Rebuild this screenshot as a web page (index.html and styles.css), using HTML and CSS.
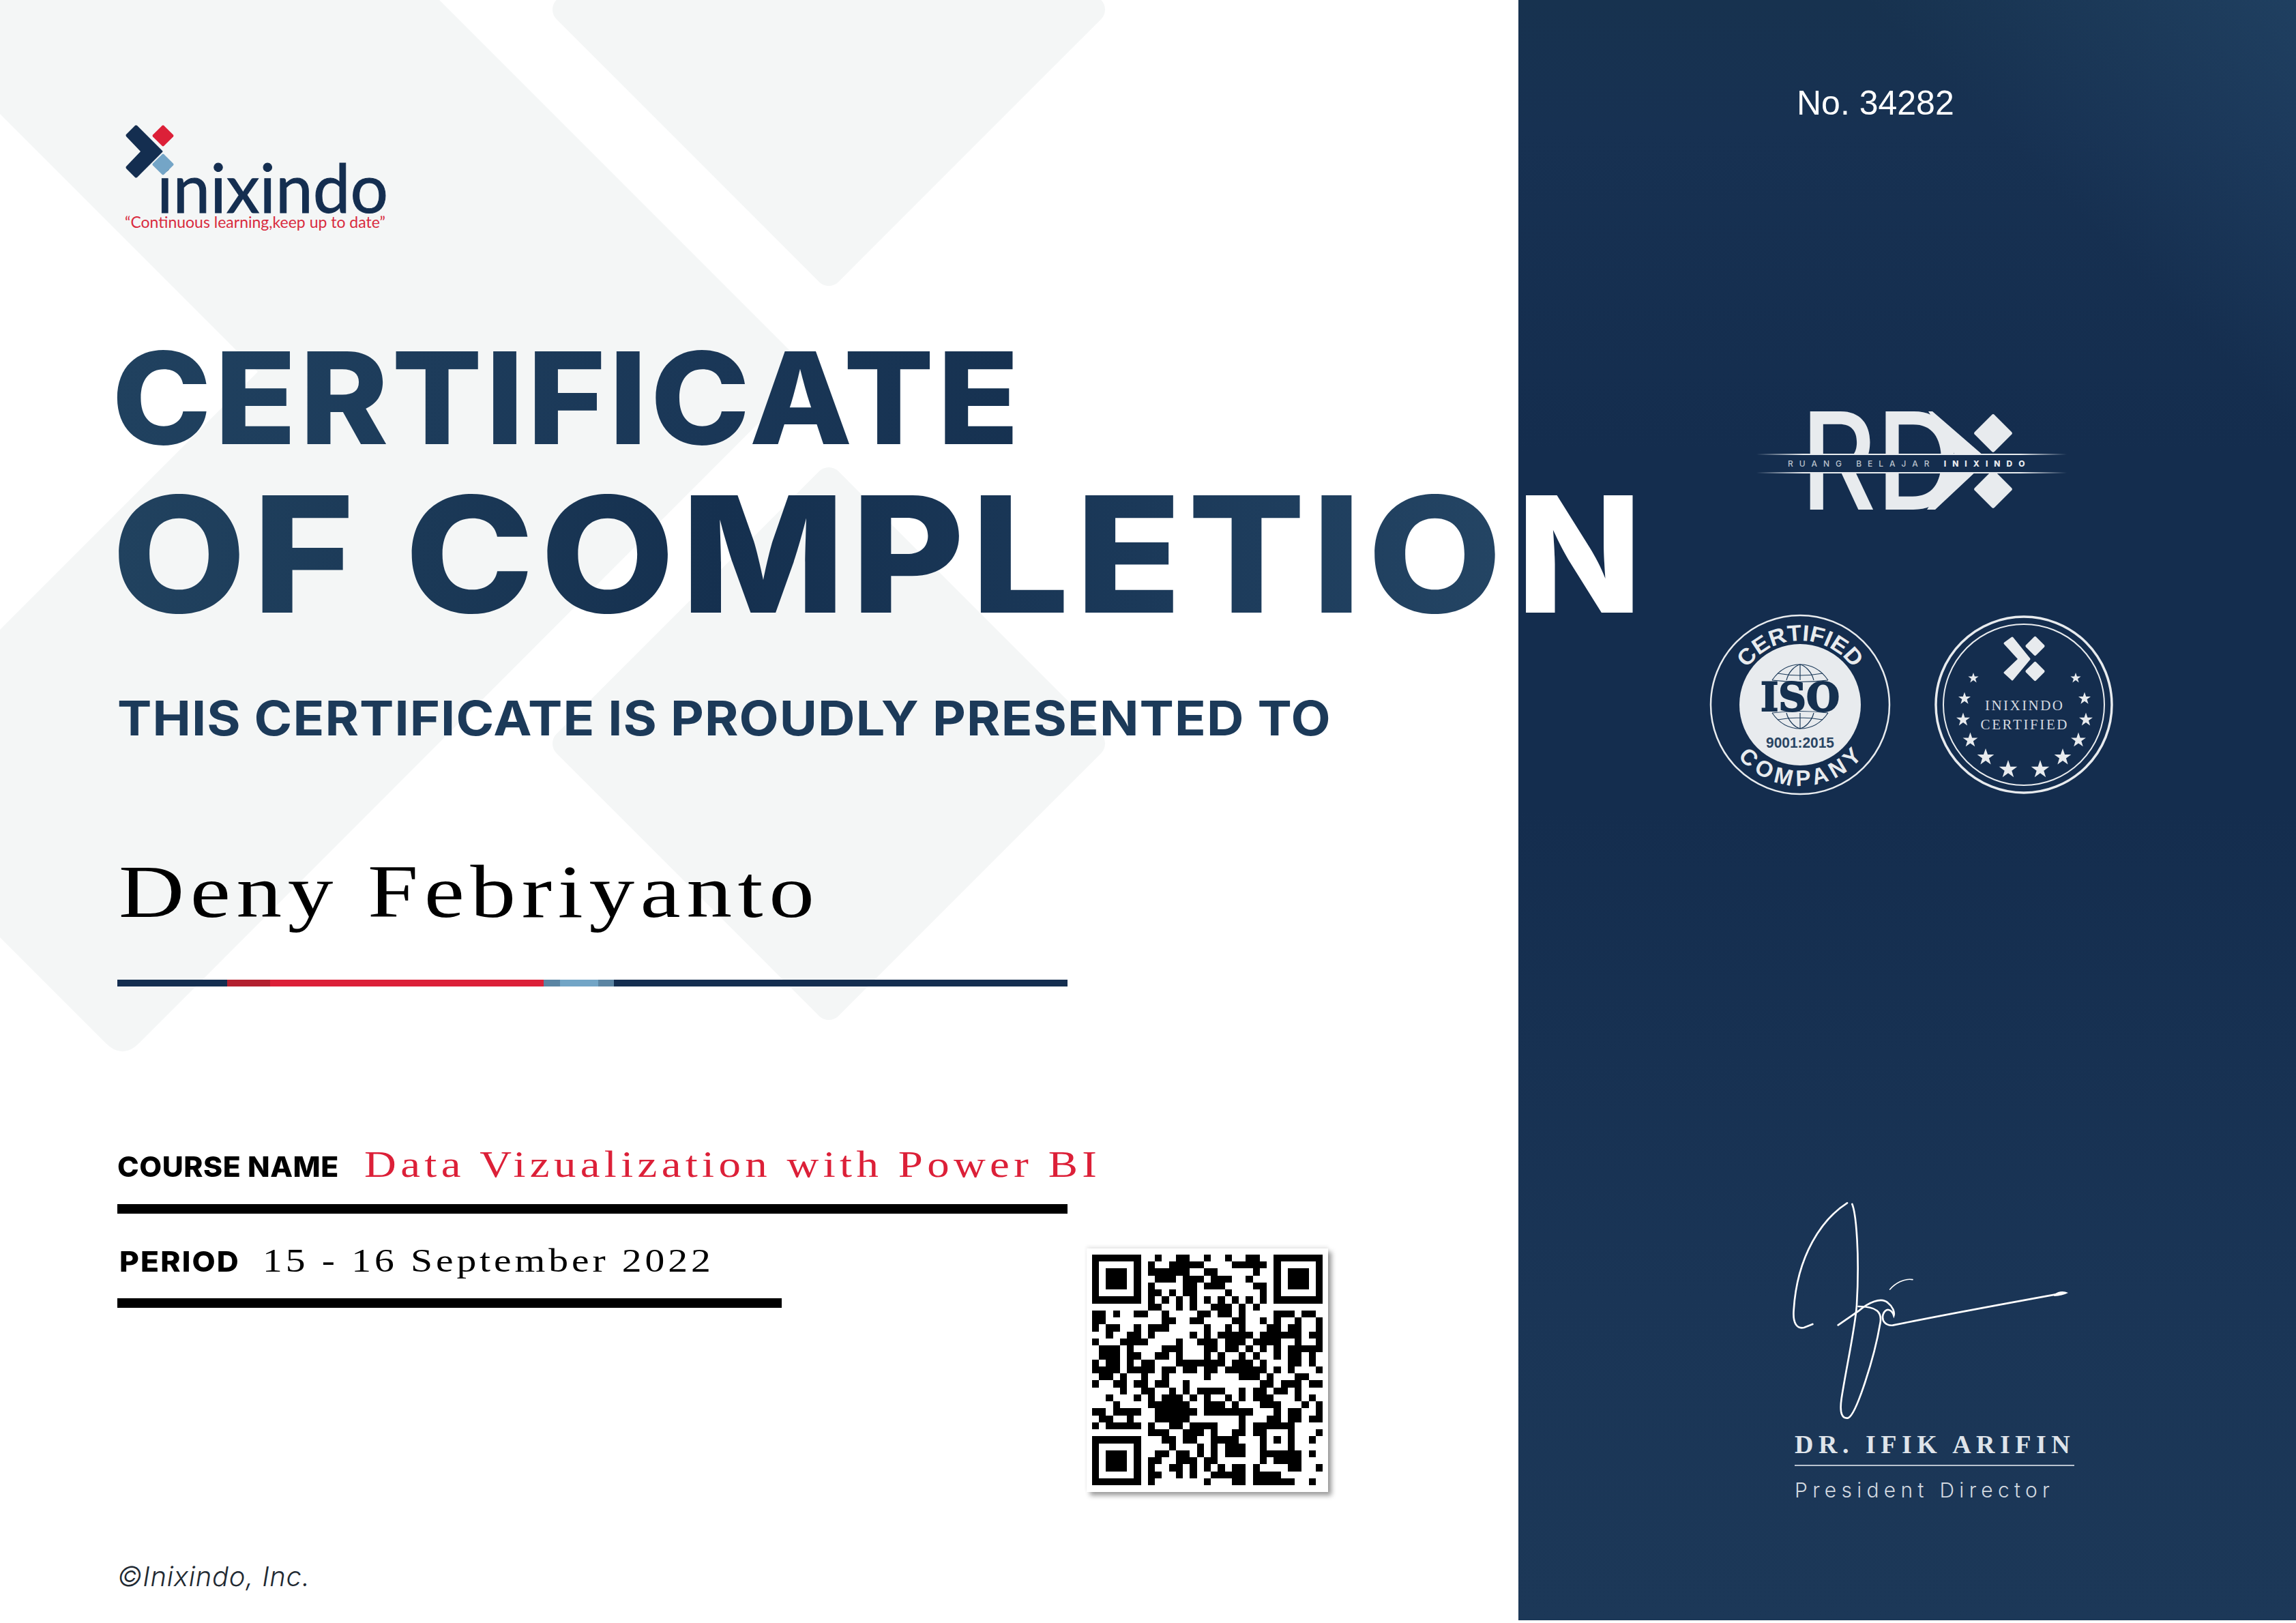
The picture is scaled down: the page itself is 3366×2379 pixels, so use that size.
FILE: index.html
```html
<!DOCTYPE html>
<html lang="en">
<head>
<meta charset="utf-8">
<title>Certificate of Completion</title>
<link rel="stylesheet" href="styles.css">
</head>
<body>
<div class="certificate">
  <svg class="pattern" viewBox="0 0 2226 2379" width="2226" height="2379" aria-hidden="true">
    <path class="pattern-shape" d="M0 0H644L1188 544L205 1528Q180 1554 155 1529L0 1374V923L378 545L0 167Z"/>
    <polygon class="pattern-round" points="1215,-371 1600,14 1215,399 830,14"/>
    <polygon class="pattern-round" points="1215,705 1600,1090 1215,1475 830,1090"/>
  </svg>

  <main class="content">
    <div class="logo">
      <svg class="logo-mark" viewBox="0 0 74 80" width="74" height="80" aria-hidden="true">
        <path class="navy" d="M18 2L55 39Q56 40 55 41L18 78Q16 79 15 78L2 65Q1 63 2 62L23 40L2 18Q1 16 2 15L15 2Q16 1 18 2Z"/>
        <rect class="red" x="44.5" y="5.5" width="23" height="23" rx="2" transform="rotate(45 56 17)"/>
        <rect class="blue" x="44.5" y="47.5" width="23" height="23" rx="2" transform="rotate(45 56 59)"/>
      </svg>
      <div class="logo-word">inixindo</div>
      <div class="logo-tag">“Continuous learning,keep up to date”</div>
    </div>

    <h1 class="title">
      <span class="title-one">CERTIFICATE</span>
      <span class="title-two">OF COMPLETIO<span class="title-last">N</span></span>
    </h1>
    <p class="subtitle">THIS CERTIFICATE IS PROUDLY PRESENTED TO</p>
    <p class="recipient">Deny Febriyanto</p>
    <div class="rule">
      <span class="seg seg-navy seg-a"></span>
      <span class="seg seg-darkred seg-b"></span>
      <span class="seg seg-red seg-c"></span>
      <span class="seg seg-steel seg-d"></span>
      <span class="seg seg-sky seg-e"></span>
      <span class="seg seg-steel seg-f"></span>
      <span class="seg seg-navy seg-g"></span>
    </div>

    <div class="course">
      <span class="label">COURSE NAME</span>
      <span class="course-value">Data Vizualization with Power BI</span>
    </div>

    <div class="lower">
      <div class="period">
        <div class="period-row">
          <span class="label label-period">PERIOD</span>
          <span class="period-value">15 - 16 September 2022</span>
        </div>
      </div>
      <div class="qr">
        <svg viewBox="0 0 33 33" width="338" height="338" shape-rendering="crispEdges" aria-label="QR code">
          <path class="qr-modules" d="M0 .5h7M0 1.5h1M6 1.5h1M0 2.5h1M2 2.5h3M6 2.5h1M0 3.5h1M2 3.5h3M6 3.5h1M0 4.5h1M2 4.5h3M6 4.5h1M0 5.5h1M6 5.5h1M0 6.5h7
          M26 .5h7M26 1.5h1M32 1.5h1M26 2.5h1M28 2.5h3M32 2.5h1M26 3.5h1M28 3.5h3M32 3.5h1M26 4.5h1M28 4.5h3M32 4.5h1M26 5.5h1M32 5.5h1M26 6.5h7
          M0 26.5h7M0 27.5h1M6 27.5h1M0 28.5h1M2 28.5h3M6 28.5h1M0 29.5h1M2 29.5h3M6 29.5h1M0 30.5h1M2 30.5h3M6 30.5h1M0 31.5h1M6 31.5h1M0 32.5h7
          M9 .5h1M12 .5h2M16 .5h1M19 .5h1M22 .5h2
          M8 1.5h1M11 1.5h5M20 1.5h5
          M8 2.5h6M16 2.5h2M23 2.5h1
          M9 3.5h3M13 3.5h3M17 3.5h3M22 3.5h1
          M8 4.5h1M13 4.5h2M16 4.5h3M23 4.5h2
          M8 5.5h2M11 5.5h1M13 5.5h2M19 5.5h1M24 5.5h1
          M8 6.5h1M10 6.5h1M12 6.5h1M14 6.5h1M16 6.5h1M18 6.5h1M20 6.5h1M22 6.5h1M24 6.5h1
          M8 7.5h2M12 7.5h1M14 7.5h1M17 7.5h3M21 7.5h1M23 7.5h1
          M0 8.5h2M3 8.5h1M6 8.5h2M10 8.5h1M15 8.5h2M18 8.5h2M21 8.5h1M26 8.5h3M30 8.5h2
          M0 9.5h2M10 9.5h2M14 9.5h2M20 9.5h2M24 9.5h1M26 9.5h1M29 9.5h1M32 9.5h1
          M0 10.5h1M2 10.5h2M6 10.5h1M8 10.5h3M16 10.5h1M19 10.5h1M21 10.5h1M25 10.5h2M28 10.5h1M29 10.5h1M32 10.5h1
          M2 11.5h1M5 11.5h2M8 11.5h1M14 11.5h1M16 11.5h1M18 11.5h5M24 11.5h5M29 11.5h1M31 11.5h2
          M0 12.5h1M4 12.5h4M12 12.5h1M15 12.5h3M19 12.5h3M23 12.5h4M29 12.5h1M32 12.5h1
          M1 13.5h3M5 13.5h1M10 13.5h3M16 13.5h2M19 13.5h2M22 13.5h1M24 13.5h1M26 13.5h1M28 13.5h5
          M1 14.5h3M5 14.5h2M9 14.5h2M12 14.5h1M16 14.5h1M18 14.5h1M21 14.5h1M23 14.5h1M26 14.5h1M28 14.5h2M31 14.5h1
          M0 15.5h1M2 15.5h2M5 15.5h1M7 15.5h2M12 15.5h7M20 15.5h3M24 15.5h1M28 15.5h2M31 15.5h1
          M0 16.5h4M5 16.5h4M10 16.5h2M13 16.5h2M16 16.5h2M19 16.5h6M26 16.5h1M28 16.5h1M32 16.5h1
          M1 17.5h2M4 17.5h1M7 17.5h1M10 17.5h1M16 17.5h1M21 17.5h3M25 17.5h1M29 17.5h2
          M0 18.5h1M3 18.5h2M6 18.5h2M9 18.5h2M13 18.5h1M24 18.5h2M27 18.5h3M31 18.5h2
          M4 19.5h1M7 19.5h2M11 19.5h1M13 19.5h1M15 19.5h4M21 19.5h1M23 19.5h2M26 19.5h2M29 19.5h1
          M2 20.5h1M6 20.5h1M8 20.5h1M10 20.5h3M14 20.5h1M16 20.5h1M19 20.5h1M21 20.5h1M23 20.5h3M29 20.5h1M31 20.5h1
          M3 21.5h1M8 21.5h6M16 21.5h3M20 21.5h1M24 21.5h3M30 21.5h1M32 21.5h1
          M0 22.5h2M3 22.5h4M9 22.5h6M16 22.5h7M26 22.5h1M28 22.5h2M32 22.5h1
          M1 23.5h2M5 23.5h1M9 23.5h5M21 23.5h1M25 23.5h2M28 23.5h2M31 23.5h2
          M0 24.5h1M2 24.5h5M8 24.5h1M11 24.5h2M14 24.5h4M21 24.5h1M23 24.5h6
          M8 25.5h3M13 25.5h3M17 25.5h1M20 25.5h2M23 25.5h2M28 25.5h1M32 25.5h1
          M10 26.5h2M13 26.5h2M17 26.5h4M24 26.5h1M26 26.5h1M28 26.5h1M31 26.5h1
          M11 27.5h1M15 27.5h1M17 27.5h1M19 27.5h3M24 27.5h1M28 27.5h1
          M9 28.5h2M12 28.5h2M15 28.5h1M17 28.5h1M19 28.5h3M24 28.5h6M31 28.5h1
          M8 29.5h2M12 29.5h3M16 29.5h2M24 29.5h1M26 29.5h4
          M8 30.5h1M11 30.5h2M14 30.5h1M16 30.5h1M18 30.5h1M20 30.5h2M23 30.5h1M28 30.5h2M32 30.5h1
          M8 31.5h2M12 31.5h1M14 31.5h1M17 31.5h5M23 31.5h4
          M8 32.5h1M16 32.5h1M20 32.5h2M23 32.5h6M31 32.5h1"/>
        </svg>
      </div>
    </div>

    <p class="copyright">©Inixindo, Inc.</p>
  </main>

  <aside class="panel">
    <p class="serial">No. 34282</p>

    <svg class="rdx" viewBox="0 0 470 160" width="470" height="160" aria-label="RDX, Ruang Belajar Inixindo">
      <defs>
        <linearGradient id="bandLine">
          <stop offset="0" stop-color="#e8ebee" stop-opacity="0"/>
          <stop offset=".15" stop-color="#e8ebee"/>
          <stop offset=".85" stop-color="#e8ebee"/>
          <stop offset="1" stop-color="#e8ebee" stop-opacity="0"/>
        </linearGradient>
      </defs>
      <text class="rdx-letters" x="65" y="144" textLength="234" lengthAdjust="spacingAndGlyphs">RD</text>
      <polygon class="rdx-fill" points="258,0 340,71 262,144 250,144 296,72 252,0"/>
      <rect class="rdx-fill" x="326.5" y="11.5" width="41" height="41" rx="3" transform="rotate(45 347 32)"/>
      <rect class="rdx-fill" x="326.5" y="93.5" width="41" height="41" rx="3" transform="rotate(45 347 114)"/>
      <rect class="rdx-band" x="0" y="63" width="470" height="27"/>
      <rect x="0" y="62" width="455" height="2" fill="url(#bandLine)"/>
      <rect x="0" y="89" width="455" height="2" fill="url(#bandLine)"/>
      <text class="rdx-tag" x="46" y="81">RUANG BELAJAR <tspan class="rdx-tag-bold">INIXINDO</tspan></text>
    </svg>

    <div class="badges">
      <svg class="badge" viewBox="-135 -135 270 270" width="270" height="270" aria-label="ISO 9001:2015 certified company">
        <defs>
          <path id="arcTop" d="M-94 0A94 94 0 0 1 94 0"/>
          <path id="arcBottom" d="M-119 0A119 119 0 0 0 119 0"/>
          <polygon id="star" points="0,-1 .235,-.309 .951,-.309 .38,.118 .588,.809 0,.382 -.588,.809 -.38,.118 -.951,-.309 -.235,-.309"/>
        </defs>
        <circle class="badge-ring-thin" r="131"/>
        <circle class="badge-disc" r="89"/>
        <text class="iso-arc"><textPath href="#arcTop" startOffset="50%" textLength="182" lengthAdjust="spacingAndGlyphs">CERTIFIED</textPath></text>
        <text class="iso-arc"><textPath href="#arcBottom" startOffset="50%" textLength="208" lengthAdjust="spacing">COMPANY</textPath></text>
        <g class="globe">
          <path d="M-41 -36C-30 -52 -15 -59 0 -59C15 -59 30 -52 41 -36"/>
          <path d="M-20 -36C-17 -48 -8 -57 0 -59C8 -57 17 -48 20 -36M0 -59V-36M-33 -46Q0 -40 33 -46M-41 -36Q0 -31 41 -36"/>
          <path d="M-41 12C-30 28 -15 35 0 35C15 35 30 28 41 12"/>
          <path d="M-20 12C-17 24 -8 33 0 35C8 33 17 24 20 12M0 12V35M-33 22Q0 16 33 22M-41 12Q0 7 41 12"/>
        </g>
        <text class="iso-main" x="0" y="9" textLength="116" lengthAdjust="spacingAndGlyphs">ISO</text>
        <text class="iso-code" x="0" y="63" textLength="100" lengthAdjust="spacingAndGlyphs">9001:2015</text>
      </svg>
      <svg class="badge" viewBox="-135 -135 270 270" width="270" height="270" aria-label="Inixindo certified">
        <circle class="seal-outer" r="129"/>
        <circle class="seal-inner" r="118"/>
        <g class="seal-mark">
          <polygon class="seal-chevron" points="-28,-90 -17,-98 8,-67 -17,-37 -28,-47 -7,-67"/>
          <rect x="6" y="-96.5" width="21" height="21" rx="2" transform="rotate(45 16.5 -86)"/>
          <rect x="6" y="-59.5" width="21" height="21" rx="2" transform="rotate(45 16.5 -49)"/>
        </g>
        <g class="seal-stars">
          <use href="#star" transform="translate(-74 -39) scale(8)"/>
          <use href="#star" transform="translate(76 -39) scale(8)"/>
          <use href="#star" transform="translate(-87 -9) scale(9.5)"/>
          <use href="#star" transform="translate(89 -9) scale(9.5)"/>
          <use href="#star" transform="translate(-89 22) scale(10.5)"/>
          <use href="#star" transform="translate(91 22) scale(10.5)"/>
          <use href="#star" transform="translate(-78.5 52) scale(11.5)"/>
          <use href="#star" transform="translate(80 52) scale(11.5)"/>
          <use href="#star" transform="translate(-56 77) scale(13)"/>
          <use href="#star" transform="translate(57 77) scale(13)"/>
          <use href="#star" transform="translate(-23 95) scale(14)"/>
          <use href="#star" transform="translate(24 95) scale(14)"/>
        </g>
        <text class="seal-text" x="0" y="8" textLength="114">INIXINDO</text>
        <text class="seal-text" x="0" y="36" textLength="127">CERTIFIED</text>
      </svg>
    </div>

    <div class="signatory">
      <svg class="signature" viewBox="0 0 1560 1050" width="520" height="350" aria-hidden="true">
        <g class="sig-stroke">
          <path d="M390 70C280 140 170 300 155 540C150 600 170 625 200 618L238 603"/>
          <path d="M412 75C430 120 445 300 432 520C425 620 385 800 365 930C355 1000 370 1020 395 1015C430 1000 510 750 535 600C545 550 520 525 440 525"/>
          <path d="M350 607L440 545C480 510 540 480 570 510C590 525 600 550 595 565C585 535 560 530 548 560C540 590 560 610 590 608C800 565 1100 510 1320 470"/>
          <path class="sig-thin" d="M578 450C600 425 640 400 678 407"/>
        </g>
        <path class="sig-tip" d="M1300 472Q1330 450 1362 465Q1335 478 1300 480Z"/>
      </svg>
      <p class="sign-name">DR. IFIK ARIFIN</p>
      <p class="sign-role">President Director</p>
    </div>
  </aside>
</div>
</body>
</html>
```
FILE: styles.css
```css
* { box-sizing: border-box; }

html, body {
  margin: 0;
  padding: 0;
  background: #ffffff;
}

.certificate {
  position: relative;
  display: flex;
  width: 3366px;
  height: 2379px;
  overflow: hidden;
  background: #ffffff;
}

.pattern {
  position: absolute;
  left: 0;
  top: 0;
}

.pattern-shape { fill: #f4f6f6; }
.pattern-round { fill: #f4f6f6; stroke: #f4f6f6; stroke-width: 40; stroke-linejoin: round; }

.content {
  position: relative;
  z-index: 1;
  width: 2226px;
  flex: none;
  padding: 182px 0 0 172px;
}

.panel {
  position: relative;
  flex: none;
  width: 1140px;
  height: 2375px;
  background:
    linear-gradient(225deg, rgba(38, 74, 110, 0.55) 0, rgba(38, 74, 110, 0) 18%),
    linear-gradient(180deg, #17324f 0%, #173152 8%, #142d4e 28%, #142d4e 50%, #1a3556 80%, #1c3858 100%);
  display: flex;
  flex-direction: column;
}

.logo {
  position: relative;
  height: 160px;
  margin-left: 11px;
}

.logo-mark {
  position: relative;
  z-index: 1;
  display: block;
}

.navy { fill: #142e50; }
.red { fill: #dc2038; }
.blue { fill: #74a5c7; }

.logo-word {
  position: absolute;
  left: 47px;
  top: 43px;
  font-family: "Lato", sans-serif;
  font-size: 98px;
  line-height: 98px;
  font-weight: 400;
  color: #142e50;
  -webkit-text-stroke: 1px #142e50;
}

.logo-tag {
  position: absolute;
  left: 0;
  top: 127px;
  font-family: "Lato", sans-serif;
  font-size: 23px;
  line-height: 32px;
  color: #d92b3e;
  white-space: nowrap;
}

.title {
  margin: 148px 0 0 -8px;
  font-family: "Inter", sans-serif;
  font-weight: 800;
  color: #15304f;
}

.title-one,
.title-two {
  display: block;
  white-space: nowrap;
  transform-origin: left center;
  -webkit-background-clip: text;
  background-clip: text;
  color: transparent;
}

.title-one {
  width: 1400px;
  font-size: 187px;
  line-height: 187px;
  letter-spacing: 4.6px;
  transform: scaleX(1.05);
  background-image: linear-gradient(90deg, #20415f 0%, #1a3757 60%, #15304f 100%);
}

.title-two {
  width: 2200px;
  margin-top: 17px;
  font-size: 236px;
  line-height: 236px;
  letter-spacing: 8.5px;
  transform: scaleX(1.08);
  background-image: linear-gradient(90deg, #21425f 0, #15304f 830px, #1b3959 1400px, #244564 1900px);
}

.title-last {
  display: inline-block;
  letter-spacing: 0;
  color: #ffffff;
  transform: scaleX(0.94);
  transform-origin: right center;
}

.subtitle {
  margin: 78px 0 0;
  font-family: "Inter", sans-serif;
  font-size: 70px;
  line-height: 90px;
  font-weight: 700;
  letter-spacing: 1px;
  transform: scaleX(1.078);
  transform-origin: left center;
  color: #1c3a59;
  white-space: nowrap;
}

.recipient {
  margin: 145px 0 0 2px;
  font-family: "Liberation Serif", serif;
  font-size: 111px;
  line-height: 128px;
  letter-spacing: 7.2px;
  transform: scaleX(1.2);
  transform-origin: left center;
  color: #000000;
  white-space: nowrap;
}

.rule {
  display: flex;
  width: 1393px;
  height: 10px;
  margin-top: 65px;
}

.seg { display: block; height: 100%; }
.seg-a { width: 161px; }
.seg-b { width: 63px; }
.seg-c { width: 401px; }
.seg-d { width: 24px; }
.seg-e { width: 56px; }
.seg-f { width: 23px; }
.seg-g { flex: 1; }
.seg-navy { background: #142e50; }
.seg-darkred { background: #b3202f; }
.seg-red { background: #dc2038; }
.seg-steel { background: #5b85a3; }
.seg-sky { background: #72a5c6; }

.label {
  font-family: "Inter", sans-serif;
  font-weight: 800;
  font-size: 41px;
  line-height: 36px;
  letter-spacing: 0.5px;
  transform: scaleX(1.04);
  transform-origin: left center;
  color: #000000;
  white-space: nowrap;
}

.label-period {
  letter-spacing: 2px;
  transform: scaleX(1.08);
}

.course {
  display: flex;
  align-items: baseline;
  gap: 50px;
  width: 1393px;
  height: 110px;
  margin-top: 223px;
  border-bottom: 14px solid #000000;
}

.course-value {
  font-family: "Liberation Serif", serif;
  font-size: 54px;
  line-height: 76px;
  letter-spacing: 5.3px;
  transform: scaleX(1.2);
  transform-origin: left center;
  color: #dc2038;
  white-space: nowrap;
}

.lower {
  display: flex;
  margin-top: 51px;
}

.period {
  width: 974px;
  margin-right: 447px;
}

.period-row {
  display: flex;
  align-items: baseline;
  gap: 46px;
  height: 87px;
  padding-left: 3px;
  border-bottom: 14px solid #000000;
}

.period-value {
  font-family: "Liberation Serif", serif;
  font-size: 48px;
  line-height: 36px;
  letter-spacing: 4.1px;
  transform: scaleX(1.2);
  transform-origin: left center;
  color: #000000;
  white-space: nowrap;
}

.qr {
  width: 354px;
  height: 357px;
  padding: 9px 8px;
  background: #ffffff;
  box-shadow: 5px 5px 7px rgba(0, 0, 0, 0.4), 0 -3px 5px rgba(0, 0, 0, 0.08);
}

.qr svg { display: block; }
.qr-modules { stroke: #000000; stroke-width: 1; fill: none; }

.copyright {
  margin: 100px 0 0;
  font-family: "Inter", sans-serif;
  font-style: italic;
  font-weight: 300;
  font-size: 40px;
  line-height: 48px;
  letter-spacing: 0.7px;
  color: #222a33;
}

.serial {
  margin: 122px 0 0 408px;
  font-family: "Liberation Sans", sans-serif;
  font-size: 50px;
  line-height: 58px;
  color: #ffffff;
  white-space: nowrap;
}

.rdx {
  display: block;
  margin: 423px 0 0 349px;
}

.rdx-letters {
  font-family: "Inter", sans-serif;
  font-weight: 500;
  font-size: 198px;
  fill: #e8ebee;
}

.rdx-fill { fill: #e8ebee; }
.rdx-band { fill: #142d4e; }

.rdx-tag {
  font-family: "Inter", sans-serif;
  font-size: 12px;
  font-weight: 500;
  letter-spacing: 9px;
  fill: #b9c2cc;
}

.rdx-tag-bold { font-weight: 800; fill: #e8ebee; }

.badges {
  display: flex;
  gap: 58px;
  margin: 135px 0 0 278px;
}

.badge { display: block; flex: none; }

.badge-ring-thin { fill: none; stroke: #e8ebee; stroke-width: 2.5; }
.badge-disc { fill: #e8ebee; }

.iso-arc {
  font-family: "Liberation Sans", sans-serif;
  font-weight: 700;
  font-size: 33px;
  fill: #e8ebee;
  text-anchor: middle;
}

.globe path { fill: none; stroke: #1c3a59; stroke-width: 1.2; }

.iso-main {
  font-family: "DejaVu Serif", serif;
  font-weight: 700;
  font-size: 58px;
  fill: #15304f;
  stroke: #15304f;
  stroke-width: 2;
  text-anchor: middle;
}

.iso-code {
  font-family: "Liberation Sans", sans-serif;
  font-weight: 700;
  font-size: 22px;
  fill: #2a4563;
  text-anchor: middle;
}

.seal-outer { fill: none; stroke: #e8ebee; stroke-width: 3.5; }
.seal-inner { fill: none; stroke: #e8ebee; stroke-width: 2; }
.seal-mark, .seal-stars { fill: #e8ebee; }
.seal-chevron { stroke: #e8ebee; stroke-width: 3; stroke-linejoin: round; }

.seal-text {
  font-family: "Liberation Serif", serif;
  font-size: 21px;
  fill: #d5dae0;
  text-anchor: middle;
}

.signatory {
  width: 410px;
  margin: 572px 0 0 405px;
}

.signature {
  display: block;
  margin: 0 0 0 -53px;
}

.sig-stroke path {
  fill: none;
  stroke: #ffffff;
  stroke-width: 8;
  stroke-linecap: round;
}

.sig-stroke .sig-thin { stroke-width: 5; }
.sig-tip { fill: #ffffff; }

.sign-name {
  margin: 7px 0 0;
  padding-bottom: 10px;
  border-bottom: 2px solid #b9c3cf;
  font-family: "Liberation Serif", serif;
  font-weight: 700;
  font-size: 38px;
  line-height: 40px;
  letter-spacing: 7.5px;
  color: #dfe4ea;
  white-space: nowrap;
}

.sign-role {
  margin: 17px 0 0;
  font-family: "Inter", sans-serif;
  font-weight: 300;
  font-size: 30px;
  line-height: 36px;
  letter-spacing: 7.3px;
  color: #d3d9e0;
  white-space: nowrap;
}
```
